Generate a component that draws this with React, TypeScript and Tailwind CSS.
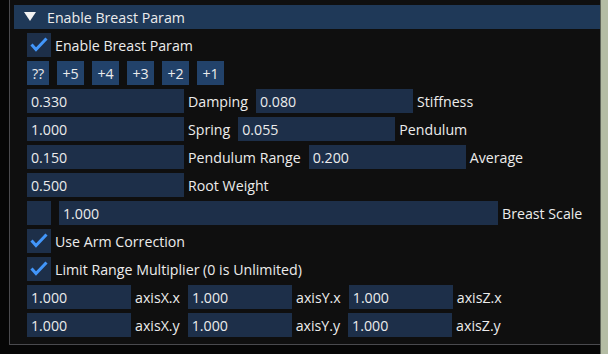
import React from "react";

const font = { fontFamily: '"Open Sans", "Noto Sans", sans-serif' };

function Check() {
  return (
    <div className="flex h-[24px] w-[24px] shrink-0 items-center justify-center bg-[#1d2f49]">
      <svg width="24" height="24" viewBox="0 0 24 24">
        <polyline
          points="4.5,11.5 9,16.5 19.5,5.5"
          fill="none"
          stroke="#4296fa"
          strokeWidth="3"
        />
      </svg>
    </div>
  );
}

function CheckRow({ label }: { label: string }) {
  return (
    <div className="flex h-[24px] items-center">
      <Check />
      <span className="ml-[4px] pt-[1px]">{label}</span>
    </div>
  );
}

function Field({ value, w }: { value?: string; w: string }) {
  return (
    <div className={`flex h-[24px] shrink-0 items-center bg-[#1d2f49] pl-[4px] pt-[1px] ${w}`}>
      {value}
    </div>
  );
}

function Label({ text }: { text: string }) {
  return <span className="ml-[4px] mr-[8px] whitespace-nowrap pt-[1px]">{text}</span>;
}

function Btn({ text, w }: { text: string; w: string }) {
  return (
    <div className={`flex h-[24px] items-center justify-center bg-[#22426a] pt-[1px] ${w}`}>
      {text}
    </div>
  );
}

export default function App() {
  return (
    <div
      className="flex h-[354px] w-[608px] overflow-hidden bg-[#060606] text-[14.2px] text-[#ececec]"
      style={font}
    >
      <div className="w-[9px] shrink-0" />
      <div className="flex h-[345px] w-[591px] shrink-0 flex-col gap-[4px] border-b border-l border-[#4a4a4e] bg-[#0f0f0f] pt-[5px]">
        <div className="ml-[4px] flex h-[24px] items-center bg-[#1f3958]">
          <svg width="12" height="10" viewBox="0 0 12 10" className="ml-[10px]">
            <polygon points="0,0 12,0 6,9" fill="#f2f2f2" />
          </svg>
          <span className="ml-[11px] pt-[1px]">Enable Breast Param</span>
        </div>

        <div className="flex flex-col gap-[4px] pl-[17px]">
          <CheckRow label="Enable Breast Param" />

          <div className="flex h-[24px] gap-[8px]">
            <Btn text="??" w="w-[22px]" />
            <Btn text="+5" w="w-[27px]" />
            <Btn text="+4" w="w-[27px]" />
            <Btn text="+3" w="w-[27px]" />
            <Btn text="+2" w="w-[27px]" />
            <Btn text="+1" w="w-[27px]" />
          </div>

          <div className="flex h-[24px] items-center">
            <Field value="0.330" w="w-[157px]" />
            <Label text="Damping" />
            <Field value="0.080" w="w-[157px]" />
            <Label text="Stiffness" />
          </div>

          <div className="flex h-[24px] items-center">
            <Field value="1.000" w="w-[157px]" />
            <Label text="Spring" />
            <Field value="0.055" w="w-[157px]" />
            <Label text="Pendulum" />
          </div>

          <div className="flex h-[24px] items-center">
            <Field value="0.150" w="w-[157px]" />
            <Label text="Pendulum Range" />
            <Field value="0.200" w="w-[157px]" />
            <Label text="Average" />
          </div>

          <div className="flex h-[24px] items-center">
            <Field value="0.500" w="w-[157px]" />
            <Label text="Root Weight" />
          </div>

          <div className="flex h-[24px] items-center">
            <Field w="w-[24px]" />
            <div className="w-[8px]" />
            <Field value="1.000" w="w-[439px]" />
            <Label text="Breast Scale" />
          </div>

          <CheckRow label="Use Arm Correction" />
          <CheckRow label="Limit Range Multiplier (0 is Unlimited)" />

          <div className="flex h-[24px] items-center">
            <Field value="1.000" w="w-[104px]" />
            <Label text="axisX.x" />
            <Field value="1.000" w="w-[104px]" />
            <Label text="axisY.x" />
            <Field value="1.000" w="w-[104px]" />
            <Label text="axisZ.x" />
          </div>

          <div className="flex h-[24px] items-center">
            <Field value="1.000" w="w-[104px]" />
            <Label text="axisX.y" />
            <Field value="1.000" w="w-[104px]" />
            <Label text="axisY.y" />
            <Field value="1.000" w="w-[104px]" />
            <Label text="axisZ.y" />
          </div>
        </div>
      </div>
      <div className="w-[8px] shrink-0 border-l border-[#5e6458] bg-[#b4bca4]" />
    </div>
  );
}
